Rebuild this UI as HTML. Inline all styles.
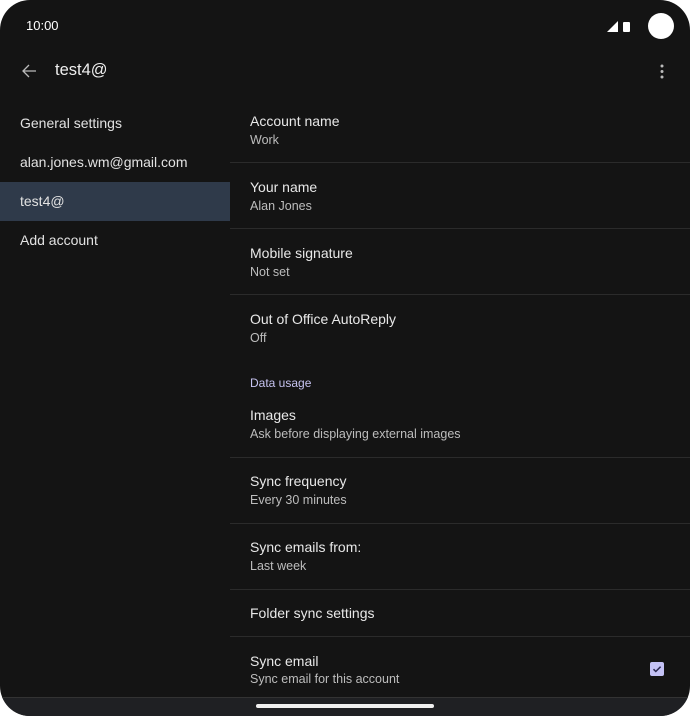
<!DOCTYPE html>
<html><head><style>
*{margin:0;padding:0;box-sizing:border-box}
body{width:690px;height:716px;background:#fff;overflow:hidden;font-family:"Liberation Sans",Roboto,sans-serif}
.dev{position:absolute;left:0;top:0;width:690px;height:716px;background:#141414;border-radius:30px;overflow:hidden}
.t{position:absolute;color:#e6e6e6}
.left{position:absolute;left:0;top:96px;width:230px}
.li{height:39px;line-height:39px;padding-left:20px;color:#e2e2e2;font-size:14px}
.sel{background:#2f3a4a}
.row{position:absolute;left:230px;width:460px;border-bottom:1px solid #2b2b2b}
.row .a{position:absolute;left:20px;color:#e8e8e8;font-size:14px}
.row .b{position:absolute;left:20px;color:#bdbdbd;font-size:12.5px}
</style></head><body>
<div class="dev">
<div class="t" style="left:26px;top:18px;font-size:13px;color:#fff">10:00</div>
<svg style="position:absolute;left:606px;top:20px" width="28" height="14"><polygon points="1,12 12,12 12,1" fill="#fff"/><rect x="17" y="2" width="7" height="10" rx="1" fill="#fff"/></svg>
<div style="position:absolute;left:648px;top:13px;width:26px;height:26px;border-radius:50%;background:#fff"></div>
<svg style="position:absolute;left:20px;top:62px" width="18" height="18"><path d="M16 9H3M9 3L3 9l6 6" stroke="#bbb" stroke-width="1.3" fill="none"/></svg>
<div class="t" style="left:55px;top:61px;font-size:16.5px;color:#eee">test4@</div>
<svg style="position:absolute;left:659px;top:64px" width="6" height="16"><circle cx="3" cy="2" r="1.5" fill="#bbb"/><circle cx="3" cy="7.5" r="1.5" fill="#bbb"/><circle cx="3" cy="13" r="1.5" fill="#bbb"/></svg>
<div class="left" style="top:104px">
<div class="li">General settings</div>
<div class="li">alan.jones.wm@gmail.com</div>
<div class="li sel">test4@</div>
<div class="li">Add account</div>
</div>
<div class="row" style="top:96px;height:67px"><div class="a" style="top:17px">Account name</div><div class="b" style="top:37px">Work</div></div>
<div class="row" style="top:162px;height:67px"><div class="a" style="top:17px">Your name</div><div class="b" style="top:37px">Alan Jones</div></div>
<div class="row" style="top:228px;height:67px"><div class="a" style="top:17px">Mobile signature</div><div class="b" style="top:37px">Not set</div></div>
<div class="row" style="top:294px;height:66px;border:none"><div class="a" style="top:17px">Out of Office AutoReply</div><div class="b" style="top:37px">Off</div></div>
<div class="t" style="left:250px;top:376px;font-size:12px;color:#c6c3f0">Data usage</div>
<div class="row" style="top:392px;height:66px"><div class="a" style="top:15px">Images</div><div class="b" style="top:35px">Ask before displaying external images</div></div>
<div class="row" style="top:457px;height:67px"><div class="a" style="top:16px">Sync frequency</div><div class="b" style="top:36px">Every 30 minutes</div></div>
<div class="row" style="top:523px;height:67px"><div class="a" style="top:16px">Sync emails from:</div><div class="b" style="top:36px">Last week</div></div>
<div class="row" style="top:589px;height:48px"><div class="a" style="top:16px">Folder sync settings</div></div>
<div class="row" style="top:636px;height:61px;border:none"><div class="a" style="top:17px">Sync email</div><div class="b" style="top:36px">Sync email for this account</div></div>
<div style="position:absolute;left:650px;top:662px;width:14px;height:14px;border-radius:2px;background:#c4c2f5"></div>
<svg style="position:absolute;left:650px;top:662px" width="14" height="14"><path d="M3.5 7.2l2.3 2.3 4.8-4.8" stroke="#2a2950" stroke-width="1.5" fill="none"/></svg>
<div style="position:absolute;left:0;top:697px;width:690px;height:19px;background:#1f2023;border-top:1px solid #333"></div>
<div style="position:absolute;left:256px;top:704px;width:178px;height:4px;border-radius:2px;background:#f0f0f0"></div>
</div>
</body></html>
